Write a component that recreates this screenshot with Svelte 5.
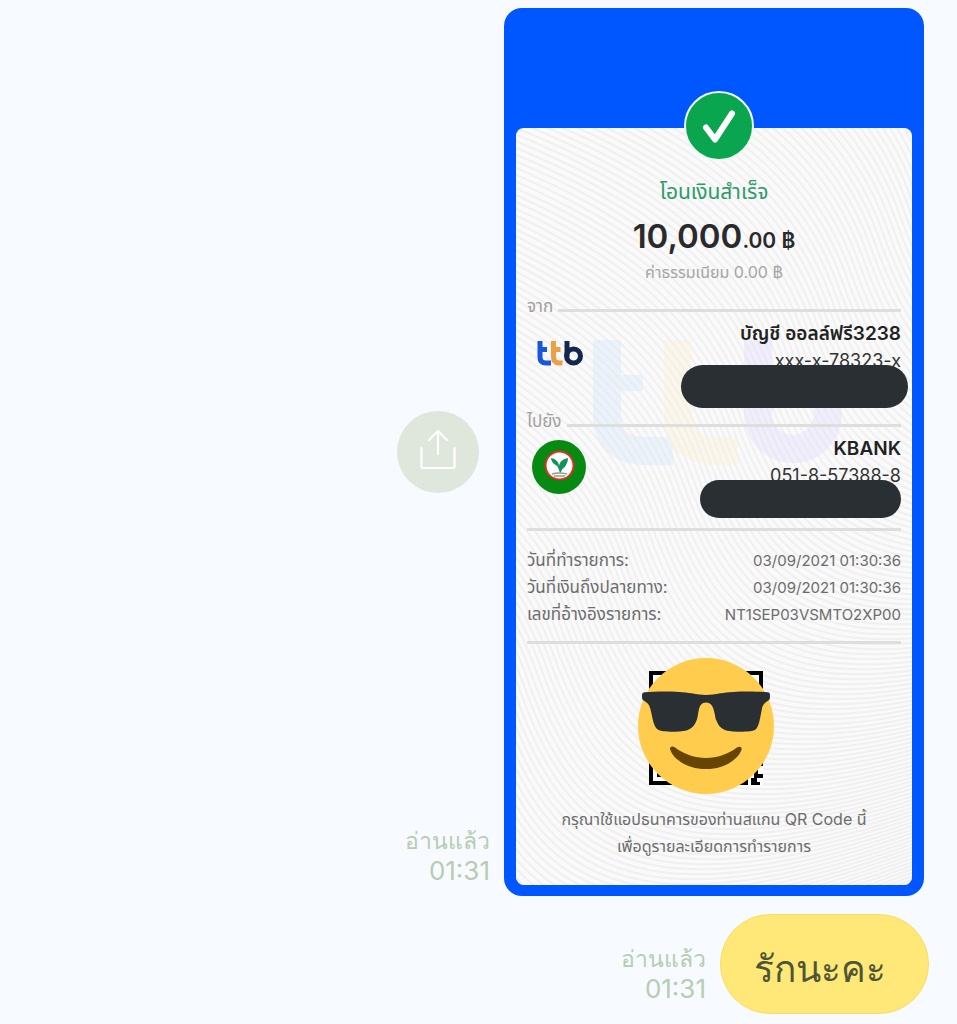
<script>
	// Transfer slip details
	const details = [
		{ label: 'วันที่ทำรายการ:', value: '03/09/2021 01:30:36' },
		{ label: 'วันที่เงินถึงปลายทาง:', value: '03/09/2021 01:30:36' },
		{ label: 'เลขที่อ้างอิงรายการ:', value: 'NT1SEP03VSMTO2XP00' },
	];

	// Offsets of the guilloche lines on the slip paper
	const waves = Array.from({ length: 260 }, (_, i) => i - 150);
</script>

{#snippet receipt()}
	<div class="receipt">
		<span>อ่านแล้ว</span>
		<time>01:31</time>
	</div>
{/snippet}

<main class="chat">
	<!-- SLIP MESSAGE -->
	<section class="message">
		<div class="side centered">
			<button class="share" aria-label="แชร์">
				<svg viewBox="0 0 82 82" fill="none" stroke="#fff" stroke-width="2.2" stroke-linecap="round" stroke-linejoin="round">
					<path d="M24.500 37v18.500q0 1.500 1.500 1.500h30q1.500 0 1.500-1.500V37M41 43V20M32 29l9-9 9 9" />
				</svg>
			</button>
			{@render receipt()}
		</div>

		<article class="slip">
			<div class="paper">
				<svg class="texture" viewBox="0 0 396 757" preserveAspectRatio="xMidYMid slice" aria-hidden="true">
					<g fill="none" stroke="#f0f0f1" stroke-width="2">
						{#each waves as n}
							<path d="M-1200-390L-500-140C-180-40 0 20 60 190S220 420 620 250L1400-80" transform="translate({n * 4 + 175} {n * -5 + 80})" />
						{/each}
					</g>
					<g fill="none" stroke-width="28" opacity="0.35">
						<path d="M91 212v75q0 36 40 36h26" stroke="#d5e5fb" />
						<path d="M91 255h36" stroke="#d5e5fb" stroke-width="16" />
						<path d="M162 212v75q0 36 40 36h20" stroke="#fbf0d2" />
						<path d="M162 255h36" stroke="#fbf0d2" stroke-width="16" />
						<path d="M242 212v74" stroke="#dedafa" />
						<circle cx="277" cy="286" r="35" stroke="#dedafa" />
					</g>
				</svg>

				<svg class="badge" viewBox="0 0 72 72" aria-hidden="true">
					<circle cx="36" cy="36" r="34" fill="#0aa54f" stroke="#effcf4" stroke-width="2" />
					<path d="M23 37.500l9 12L49 23.500" fill="none" stroke="#fff" stroke-width="6" stroke-linecap="round" stroke-linejoin="round" />
				</svg>

				<header>
					<p class="status">โอนเงินสำเร็จ</p>
					<p class="amount">10,000<small>.00 ฿</small></p>
					<p class="fee">ค่าธรรมเนียม 0.00 ฿</p>
				</header>

				<h2><span>จาก</span></h2>
				<div class="party">
					<svg class="logo" viewBox="0 0 54 54" role="img" aria-label="ttb">
						<g fill="none" stroke-width="5">
							<path d="M8 16v16q0 6 6 6h5M8 24.500h7" stroke="#1757dc" />
							<path d="M21.500 16v16q0 6 6 6h3M21.500 24.500h7" stroke="#eda043" />
							<path d="M35 16v16" stroke="#14284f" />
							<circle cx="41.500" cy="31" r="7" stroke="#14284f" />
						</g>
					</svg>
					<div class="account">
						<strong>บัญชี ออลล์ฟรี3238</strong>
						<span>xxx-x-78323-x</span>
					</div>
					<i class="redacted from"></i>
				</div>

				<h2><span>ไปยัง</span></h2>
				<div class="party">
					<svg class="logo" viewBox="0 0 54 54" role="img" aria-label="KBANK">
						<circle cx="27" cy="27" r="27" fill="#078a12" />
						<circle cx="27.500" cy="25.500" r="14" fill="#fff" stroke="#dc2f28" stroke-width="2" />
						<path d="M27 30c-1-4-3-5-5-6-2-2-3-4-3-6 5 1 8 4 8 8 1-5 4-7 9-8 0 3-1 5-2 7-1 3-4 3-5 7l-1 1z" fill="#16915c" />
						<path d="M20 34q7-2 15 0M22 36h11" stroke="#9a9a8a" fill="none" stroke-width="1.500" />
					</svg>
					<div class="account">
						<strong>KBANK</strong>
						<span>051-8-57388-8</span>
					</div>
					<i class="redacted to"></i>
				</div>

				<dl>
					{#each details as row}
						<div>
							<dt>{row.label}</dt>
							<dd>{row.value}</dd>
						</div>
					{/each}
				</dl>

				<div class="qr">
					<svg class="code" viewBox="0 0 114 114" aria-hidden="true">
						<path fill="#fff" d="M0 0h114v114H0z" />
						<path fill="none" stroke="#000" stroke-width="4" d="M2 2h26v26H2zM86 2h26v26H86zM2 86h26v26H2z" />
						<path d="M8 92h14v14H8zM92 8h14v14H92zM88 104h11v10H88zM109 90h5v5h-5zM99 99h5v5h-5zM105 99h4v4h5v4h-6v4h3v3h-9v-7h3z" />
					</svg>
					<svg class="emoji" viewBox="370 54 404 404" role="img" aria-label="😎">
						<circle cx="572" cy="256" r="202" fill="#ffcc4d" />
						<path fill="#664500" d="M465 323c0-7 9-8 15-3 28 20 58 31 92 31s64-11 92-31c6-5 15-3 14 5-6 22-42 59-106 59s-103-37-107-61z" />
						<path fill="#292f33" d="M382 164c0-5 3-7 8-8 38-4 102-4 139 3 18 4 28 5 43 5s25-1 43-5c37-7 103-7 141-3 5 1 6 4 6 8v7c0 5-2 7-6 10-12 8-16 14-18 25-7 34-9 54-21 62-9 5-31 5-50 5-40 0-54-7-64-33-7-18-5-54-31-54s-20 36-28 54c-11 26-25 33-65 33-19 0-37 0-48-5-15-8-17-34-24-62-3-11-6-17-19-25-4-3-6-5-6-10z" />
					</svg>
				</div>

				<footer>
					<p>กรุณาใช้แอปธนาคารของท่านสแกน QR Code นี้</p>
					<p>เพื่อดูรายละเอียดการทำรายการ</p>
				</footer>
			</div>
		</article>
	</section>

	<!-- TEXT MESSAGE -->
	<section class="message text">
		<div class="side">{@render receipt()}</div>
		<p class="bubble">รักนะคะ</p>
	</section>
</main>

<style>
	:global(body) {
		margin: 0;
		background: #f7fbff;
	}

	.chat {
		display: flex;
		flex-direction: column;
		gap: 18px;
		min-height: 100vh;
		box-sizing: border-box;
		padding: 8px 28px 10px 16px;
		font-family: Inter, "Noto Sans Thai", "Noto Sans", sans-serif;
	}

	p, h2, dl, dd {
		margin: 0;
	}

	.message {
		display: flex;
		justify-content: flex-end;
		gap: 14px;
		padding-right: 5px;
	}

	.message.text {
		padding-right: 0;
	}

	.side {
		display: grid;
		justify-items: end;
	}

	.side.centered {
		grid-template-rows: 1fr auto 1fr;
	}

	.share {
		grid-row: 2;
		width: 82px;
		height: 82px;
		margin-right: 11px;
		padding: 0;
		border: 0;
		border-radius: 50%;
		background: #dfe6db;
		cursor: pointer;
	}

	.share svg {
		display: block;
	}

	.receipt {
		align-self: end;
		display: flex;
		flex-direction: column;
		align-items: flex-end;
		padding-bottom: 10px;
		color: #b7ccb3;
		font-family: "Liberation Sans", sans-serif;
		font-size: 23px;
		line-height: 30px;
		white-space: nowrap;
	}

	.centered .receipt {
		grid-row: 3;
	}

	.receipt time {
		font-family: Inter, sans-serif;
		font-size: 26px;
	}

	.slip {
		box-sizing: border-box;
		width: 420px;
		padding: 120px 12px 11px;
		border-radius: 18px;
		background: #0057ff;
	}

	.paper {
		position: relative;
		padding: 48px 11px 25px;
		border-radius: 8px;
		background: #fafafa;
		color: #6c6c6c;
		font-size: 16px;
	}

	.texture {
		position: absolute;
		inset: 0;
		width: 100%;
		height: 100%;
		border-radius: 8px;
	}

	.badge {
		position: absolute;
		top: -38px;
		left: 167px;
		width: 72px;
		height: 72px;
	}

	header, h2, .party, dl, .qr, footer {
		position: relative;
	}

	header, footer {
		text-align: center;
	}

	.status {
		color: #2c9b6a;
		font-size: 21px;
		line-height: 32px;
	}

	.amount {
		color: #2a2a2c;
		font-size: 33px;
		font-weight: 600;
		line-height: 56px;
	}

	.amount small {
		font-size: 21px;
		line-height: 1;
	}

	.fee {
		color: #a5a5a5;
		line-height: 16px;
	}

	h2 {
		display: flex;
		align-items: center;
		gap: 5px;
		height: 20px;
		color: #a0a0a0;
		font-size: 17px;
		font-weight: 400;
		line-height: 20px;
	}

	h2 span {
		padding-bottom: 4px;
	}

	header + h2 {
		margin-top: 18px;
	}

	h2::after {
		content: "";
		flex: 1;
		height: 3px;
		margin-top: 4px;
		background: #dedede;
	}

	.party {
		display: flex;
		justify-content: space-between;
		height: 95px;
		padding-left: 5px;
	}

	.logo {
		width: 54px;
		height: 54px;
		margin-top: 7px;
	}

	.account {
		display: flex;
		flex-direction: column;
		align-items: flex-end;
		padding-top: 2px;
		color: #333;
		font-size: 18px;
		line-height: 27px;
	}

	.account strong {
		color: #222;
		font-size: 19px;
		font-weight: 600;
	}

	.redacted {
		position: absolute;
		border-radius: 22px;
		background: #292f33;
	}

	.from {
		top: 47px;
		right: -7px;
		width: 227px;
		height: 43px;
	}

	.to {
		top: 47px;
		right: 0;
		width: 201px;
		height: 38px;
	}

	dl {
		padding: 16px 0 13px;
		border: solid #dedede;
		border-width: 3px 0;
		line-height: 27px;
	}

	dl div {
		display: flex;
		justify-content: space-between;
	}

	dt {
		font-size: 17px;
	}

	dd {
		font-size: 15px;
	}

	.qr {
		display: grid;
		place-items: center;
		width: 136px;
		height: 136px;
		margin: 14px auto 12px;
		left: -8px;
	}

	.code, .emoji {
		grid-area: 1 / 1;
	}

	.code {
		width: 114px;
		margin-top: 4px;
	}

	.emoji {
		width: 136px;
		z-index: 1;
	}

	footer {
		line-height: 27px;
	}

	.bubble {
		box-sizing: border-box;
		padding: 12px 42px 0 33px;
		border: 1px solid #fbdc61;
		border-radius: 50px;
		background: #ffe878;
		color: #4d5635;
		font-family: "Liberation Sans", sans-serif;
		font-size: 37px;
		line-height: 86px;
	}
</style>
